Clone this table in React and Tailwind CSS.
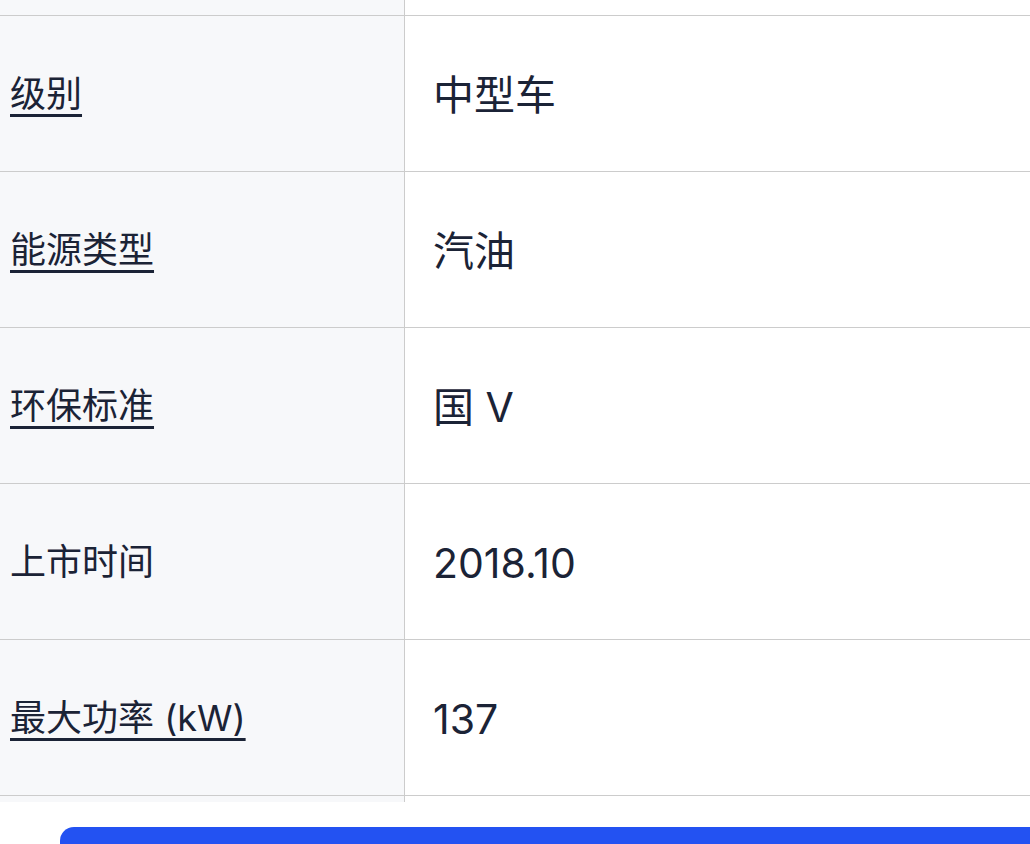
import React from 'react';

const rows = [
  { label: '级别', value: '中型车', link: true },
  { label: '能源类型', value: '汽油', link: true },
  { label: '环保标准', value: '国 V', link: true },
  { label: '上市时间', value: '2018.10', link: false },
  { label: '最大功率 (kW)', value: '137', link: true },
];

const font = { fontFamily: 'Inter, "Noto Sans CJK SC", sans-serif' };

const App = () => {
  return (
    <div className="w-[1030px] h-[844px] overflow-hidden bg-white text-[#1b2336]" style={font}>
      <div className="grid grid-cols-[405px_1fr]">
        <div className="h-[16px] bg-[#f7f8fa] border-r border-b border-[#cccccc]" />
        <div className="h-[16px] border-b border-[#cccccc]" />
        {rows.map((row) => (
          <React.Fragment key={row.label}>
            <div className="h-[156px] bg-[#f7f8fa] border-r border-b border-[#cccccc] flex items-center pl-[10px]">
              <span
                className={`text-[36px] leading-none ${
                  row.link ? 'underline decoration-[3px] underline-offset-[7px]' : ''
                }`}
              >
                {row.label}
              </span>
            </div>
            <div className="h-[156px] border-b border-[#cccccc] flex items-center pl-[28px] pt-[3px]">
              <span className="text-[41px] leading-none">{row.value}</span>
            </div>
          </React.Fragment>
        ))}
        <div className="h-[6px] bg-[#f7f8fa] border-r border-[#cccccc]" />
        <div className="h-[6px]" />
      </div>
      <div className="pt-[25px] pl-[60px]">
        <button className="w-[1000px] h-[56px] rounded-[14px] bg-[#2352f2]" />
      </div>
    </div>
  );
};

export default App;
